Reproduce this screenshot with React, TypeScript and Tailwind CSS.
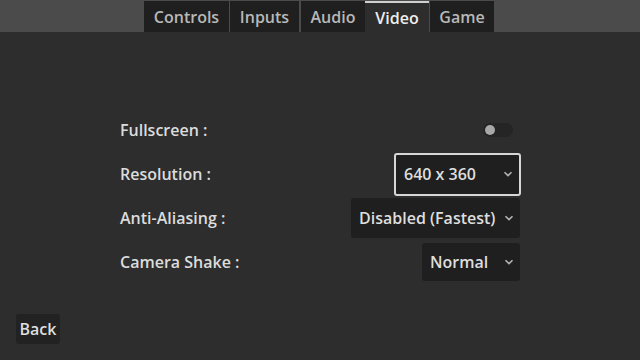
const tabs = ["Controls", "Inputs", "Audio", "Video", "Game"];

function Chevron() {
  return (
    <svg width="10" height="6" viewBox="0 0 10 6" className="ml-auto shrink-0">
      <path d="M1.5 1.2 L5 4.6 L8.5 1.2" fill="none" stroke="#b4b4b4" strokeWidth="1.6" />
    </svg>
  );
}

function Select({ value, focused, className }: { value: string; focused?: boolean; className: string }) {
  return (
    <div
      className={
        focused
          ? `flex items-center justify-self-end rounded-[3px] border-2 border-[#d6d6d6] bg-[#1f1f1f] pl-[8px] pr-[6px] ${className}`
          : `flex items-center justify-self-end rounded-[3px] bg-[#1f1f1f] pl-[8px] pr-[6px] ${className}`
      }
    >
      <span className="text-[16px] text-[#dedede]">{value}</span>
      <Chevron />
    </div>
  );
}

export default function App() {
  return (
    <div className="flex h-screen w-full flex-col bg-[#4b4b4b] font-['Open_Sans',sans-serif] font-semibold">
      <div className="flex h-[32px] items-end pl-[144px]">
        {tabs.map((t) => (
          <div
            key={t}
            className={
              t === "Video"
                ? "flex h-[31px] w-[64px] items-center justify-center border-t-2 border-[#cfcfcf] bg-[#2d2d2d] text-[16px] text-[#eeeeee]"
                : t === "Controls"
                ? "mr-[1px] flex h-[31px] w-[85px] items-center justify-center bg-[#1f1f1f] text-[16px] text-[#b8b8b8]"
                : t === "Inputs"
                ? "mr-[2px] flex h-[31px] w-[69px] items-center justify-center bg-[#1f1f1f] text-[16px] text-[#b8b8b8]"
                : t === "Audio"
                ? "flex h-[31px] w-[64px] items-center justify-center bg-[#1f1f1f] text-[16px] text-[#b8b8b8]"
                : "ml-[1px] flex h-[31px] w-[64px] items-center justify-center bg-[#1f1f1f] text-[16px] text-[#b8b8b8]"
            }
          >
            {t}
          </div>
        ))}
      </div>
      <div className="flex flex-1 flex-col bg-[#2d2d2d] px-[16px] pt-[76px] text-[#dcdcdc]">
        <div className="mx-auto grid w-[400px] grid-cols-[1fr_auto] auto-rows-[44px] items-center text-[16px]">
          <span>Fullscreen :</span>
          <div className="mr-[7px] flex h-[14px] w-[30px] items-center justify-self-end rounded-full bg-[#252525] pl-[2px]">
            <div className="h-[10px] w-[10px] rounded-full bg-[#a8a8a8]" />
          </div>
          <span>Resolution :</span>
          <Select value="640 x 360" focused className="h-[43px] w-[127px] mr-[-1px]" />
          <span>Anti-Aliasing :</span>
          <Select value="Disabled (Fastest)" className="h-[40px] w-[169px]" />
          <span>Camera Shake :</span>
          <Select value="Normal" className="h-[38px] w-[98px]" />
        </div>
        <div className="mt-[30px] flex h-[30px] w-[44px] items-center justify-center rounded-[3px] bg-[#222222] text-[16px] text-[#dedede]">
          Back
        </div>
      </div>
    </div>
  );
}
